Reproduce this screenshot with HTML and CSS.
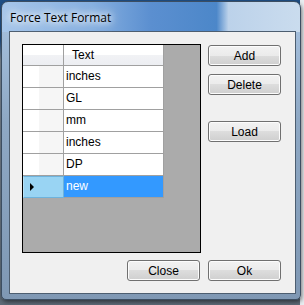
FILE: index.html
```html
<!DOCTYPE html>
<html lang="en">
<head>
    <meta charset="UTF-8">
    <title>Force Text Format</title>
    <link rel="stylesheet" href="styles.css">
</head>
<body>
    <div class="desktop">
        <div class="window">
            <div class="titlebar">
                <span class="title">Force Text Format</span>
            </div>
            <div class="client">
                <div class="main">
                    <div class="grid">
                        <div class="grid-row header">
                            <div class="row-head"></div>
                            <div class="cell">Text</div>
                        </div>
                        <div class="grid-row">
                            <div class="row-head"></div>
                            <div class="cell">inches</div>
                        </div>
                        <div class="grid-row">
                            <div class="row-head"></div>
                            <div class="cell">GL</div>
                        </div>
                        <div class="grid-row">
                            <div class="row-head"></div>
                            <div class="cell">mm</div>
                        </div>
                        <div class="grid-row">
                            <div class="row-head"></div>
                            <div class="cell">inches</div>
                        </div>
                        <div class="grid-row">
                            <div class="row-head"></div>
                            <div class="cell">DP</div>
                        </div>
                        <div class="grid-row selected">
                            <div class="row-head"><span class="arrow"></span></div>
                            <div class="cell">new</div>
                        </div>
                    </div>
                    <div class="side-buttons">
                        <button class="btn">Add</button>
                        <button class="btn">Delete</button>
                        <button class="btn load">Load</button>
                    </div>
                </div>
                <div class="footer">
                    <button class="btn">Close</button>
                    <button class="btn">Ok</button>
                </div>
            </div>
        </div>
    </div>
</body>
</html>
```

FILE: styles.css
```css
* {
    margin: 0;
    padding: 0;
    box-sizing: border-box;
}

body {
    width: 304px;
    height: 305px;
    overflow: hidden;
    font-family: 'Liberation Sans', Arial, sans-serif;
}

.desktop {
    width: 304px;
    height: 305px;
    padding: 2px 0 0 2px;
    background:
        linear-gradient(to right, transparent 0, transparent 300px, #e9edf1 300px) ,
        linear-gradient(to bottom, #1f4f86 0, #1f4f86 40px, #7d8894 60px, #5e6b78 305px);
}

.window {
    width: 300px;
    height: 299px;
    padding: 29px 5px 7px 7px;
    border: 1px solid #3c4e62;
    border-radius: 7px 7px 5px 5px;
    background:
        linear-gradient(to right, #a6c6ea 0%, #86b0e0 30%, #5b8fd0 50%, #4c87c9 72%, #bcd2ea 76%, #cadcee 100%) top / 100% 30px no-repeat,
        linear-gradient(to bottom, #a9c4e2 0, #8ea8c4 120px, #7f98b4 299px);
    box-shadow: 1px 2px 4px rgba(0, 0, 0, 0.5);
    margin-top: -1px;
    margin-left: -1px;
}

.titlebar {
    height: 29px;
    margin-top: -29px;
    padding: 6px 0 0 1px;
}

.title {
    font-family: 'Open Sans', 'Noto Sans', sans-serif;
    font-size: 12px;
    color: #000;
    text-shadow: 0 0 6px #fff, 0 0 10px #fff, 0 0 14px #fff;
}

.client {
    width: 287px;
    height: 263px;
    border: 1px solid #4d5e70;
    background: #f0f0f0;
    padding: 12px 0 0 12px;
}

.main {
    display: flex;
    gap: 7px;
}

.grid {
    width: 179px;
    height: 209px;
    border: 1px solid #000;
    background: #ababab;
}

.grid-row {
    display: flex;
    height: 22px;
}

.grid-row.header {
    height: 21px;
}

.row-head {
    width: 41px;
    border-right: 1px solid #a0a0a0;
    border-bottom: 1px solid #a0a0a0;
    background: linear-gradient(to right, #ffffff 0, #ffffff 40%, #f6f6f6 40%, #f6f6f6 100%);
    display: flex;
    align-items: center;
}

.cell {
    width: 100px;
    border-right: 1px solid #a0a0a0;
    border-bottom: 1px solid #a0a0a0;
    background: #fff;
    font-size: 12px;
    line-height: 21px;
    padding-left: 2px;
    color: #000;
}

.header .row-head,
.header .cell {
    background: linear-gradient(to bottom, #ffffff 0, #ffffff 50%, #f1f2f5 50%, #eceef2 100%);
}

.header .cell {
    padding-left: 8px;
    line-height: 20px;
}

.selected .row-head {
    background: #99d4f3;
    border: 1px solid #6eb3dc;
    border-left-color: #b8e2f8;
}

.selected .cell {
    background: #3399ff;
    color: #fff;
    border-bottom-color: #a0a0a0;
}

.arrow {
    width: 0;
    height: 0;
    margin-left: 6px;
    border-top: 4px solid transparent;
    border-bottom: 4px solid transparent;
    border-left: 4px solid #000;
}

.side-buttons {
    display: flex;
    flex-direction: column;
    padding-top: 1px;
}

.btn {
    width: 73px;
    height: 21px;
    border: 1px solid #707070;
    border-radius: 3px;
    background: linear-gradient(to bottom, #f2f2f2 0, #ebebeb 50%, #dddddd 50%, #cfcfcf 100%);
    box-shadow: inset 0 0 0 1px #fcfcfc;
    font-family: 'Liberation Sans', Arial, sans-serif;
    font-size: 12px;
    color: #000;
}

.side-buttons .btn + .btn {
    margin-top: 8px;
}

.side-buttons .load {
    margin-top: 26px !important;
}

.footer {
    display: flex;
    justify-content: flex-end;
    gap: 8px;
    width: 259px;
    margin-top: 7px;
}
```
